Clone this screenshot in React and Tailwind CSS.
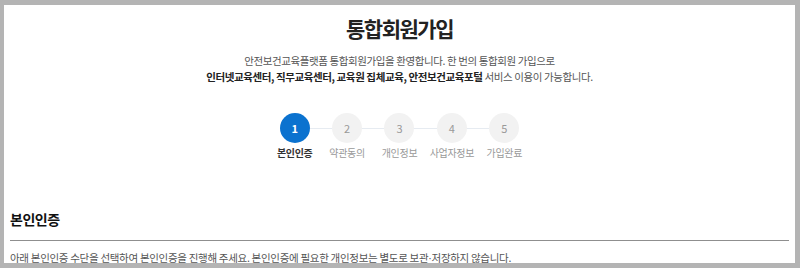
const steps = ['본인인증', '약관동의', '개인정보', '사업자정보', '가입완료'];

export default function App() {
  return (
    <div
      className="h-[268px] w-[800px] bg-[#b4b4b4] pt-[5px] pl-[4px] pr-[5px] pb-[5px]"
      style={{ fontFamily: '"Noto Sans CJK KR", "Noto Sans", sans-serif' }}
    >
      <div className="h-full overflow-hidden bg-white px-[6px]">
        <h1 className="pt-[8px] text-center text-[21px] font-bold leading-[30px] tracking-[-1.5px] text-[#222]">
          통합회원가입
        </h1>
        <div className="mt-[10px] text-center text-[10.5px] leading-[16px] tracking-[-0.4px] text-[#555]">
          <p>안전보건교육플랫폼 통합회원가입을 환영합니다. 한 번의 통합회원 가입으로</p>
          <p>
            <b className="font-bold text-[#222]">인터넷교육센터, 직무교육센터, 교육원 집체교육, 안전보건교육포털</b> 서비스 이용이 가능합니다.
          </p>
        </div>

        <div className="relative mx-auto mt-[28px] grid w-[262px] grid-cols-5">
          <div className="absolute left-[26px] right-[26px] top-[15px] h-px bg-[#e6ebf1]" />
          {steps.map((label, i) => (
            <div key={label} className="relative flex flex-col items-center">
              <div
                className={
                  i === 0
                    ? 'flex h-[30px] w-[30px] items-center justify-center rounded-full bg-[#0b72cf] text-[11px] font-bold text-white'
                    : 'flex h-[30px] w-[30px] items-center justify-center rounded-full bg-[#f2f2f2] text-[11px] text-[#999]'
                }
              >
                {i + 1}
              </div>
              <span
                className={
                  i === 0
                    ? 'mt-[3px] whitespace-nowrap text-[10px] font-bold leading-[14px] tracking-[-0.3px] text-[#333]'
                    : 'mt-[3px] whitespace-nowrap text-[10px] leading-[14px] tracking-[-0.3px] text-[#999]'
                }
              >
                {label}
              </span>
            </div>
          ))}
        </div>

        <h2 className="mt-[49px] text-[14px] font-bold leading-[20px] tracking-[-0.5px] text-[#111]">본인인증</h2>
        <div className="mt-[11px] h-px bg-[#8f8f8f]" />
        <p className="mt-[9px] text-[10.5px] leading-[16px] tracking-[-0.3px] text-[#555]">
          아래 본인인증 수단을 선택하여 본인인증을 진행해 주세요. 본인인증에 필요한 개인정보는 별도로 보관
          <span style={{ fontFamily: '"Liberation Sans", sans-serif' }}>·</span>저장하지 않습니다.
        </p>
      </div>
    </div>
  );
}
